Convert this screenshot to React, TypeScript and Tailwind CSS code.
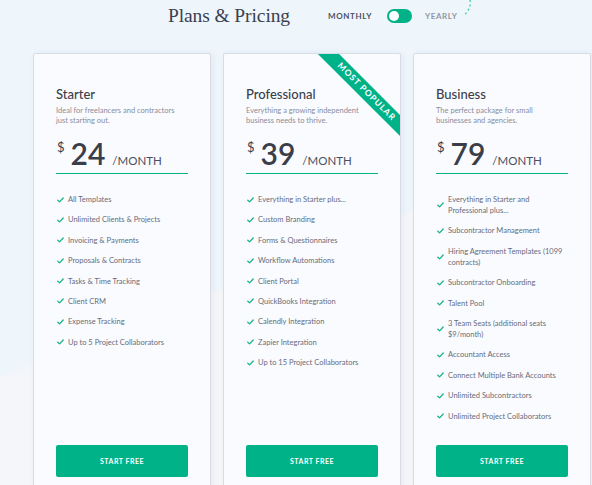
import type { ReactNode } from "react"

type Plan = {
     name: string
     desc: ReactNode
     price: string
     features: string[]
     popular?: boolean
}

const plans: Plan[] = [
     {
          name: "Starter",
          desc: (
               <>
                    Ideal for freelancers and contractors
                    <br />
                    just starting out.
               </>
          ),
          price: "24",
          features: [
               "All Templates",
               "Unlimited Clients & Projects",
               "Invoicing & Payments",
               "Proposals & Contracts",
               "Tasks & Time Tracking",
               "Client CRM",
               "Expense Tracking",
               "Up to 5 Project Collaborators",
          ],
     },
     {
          name: "Professional",
          desc: (
               <>
                    Everything a growing independent
                    <br />
                    business needs to thrive.
               </>
          ),
          price: "39",
          popular: true,
          features: [
               "Everything in Starter plus...",
               "Custom Branding",
               "Forms & Questionnaires",
               "Workflow Automations",
               "Client Portal",
               "QuickBooks Integration",
               "Calendly Integration",
               "Zapier Integration",
               "Up to 15 Project Collaborators",
          ],
     },
     {
          name: "Business",
          desc: (
               <>
                    The perfect package for small
                    <br />
                    businesses and agencies.
               </>
          ),
          price: "79",
          features: [
               "Everything in Starter and Professional plus...",
               "Subcontractor Management",
               "Hiring Agreement Templates (1099 contracts)",
               "Subcontractor Onboarding",
               "Talent Pool",
               "3 Team Seats (additional seats $9/month)",
               "Accountant Access",
               "Connect Multiple Bank Accounts",
               "Unlimited Subcontractors",
               "Unlimited Project Collaborators",
          ],
     },
]

const Check = () => (
     <svg width="7" height="6" viewBox="0 0 7 6" className="shrink-0">
          <polyline points="0.8,3.2 2.6,4.9 6.2,1" fill="none" stroke="#17b38c" strokeWidth="1.3" strokeLinecap="round" strokeLinejoin="round" />
     </svg>
)

const PlanCard = ({ plan }: { plan: Plan }) => (
     <div className="relative overflow-hidden box-border w-[178px] h-[452px] shrink-0 flex flex-col bg-[#fafbfe] border border-[#d9dce4] rounded-[2px] shadow-[2px_0_6px_rgba(150,160,180,0.12)] px-[22px] pt-[32px] pb-[27px]">
          {plan.popular && (
               <div className="absolute left-[76px] top-[29px] w-[130px] h-[15px] rotate-45 bg-[#00b288] flex items-center justify-center">
                    <span className="text-white text-[8.5px] font-bold tracking-[1px] leading-none pl-[4px] -mt-[1px]">MOST POPULAR</span>
               </div>
          )}

          <h2 className="text-[13px] leading-[16px] font-medium text-[#3b404b]">{plan.name}</h2>
          <p className="mt-[4px] text-[7.5px] leading-[10px] text-[#8a8c9c]">{plan.desc}</p>

          {/* price */}
          <div className="mt-[12px] flex items-baseline border-b-[1.5px] border-[#00b288] pb-[5px]">
               <span className="self-start text-[13px] leading-none text-[#3b404b] mt-[3px] ml-[1px]">$</span>
               <span className="ml-[6px] text-[30px] leading-none font-semibold text-[#3a3e48]">{plan.price}</span>
               <span className="ml-[7px] text-[11.5px] leading-none text-[#4b5060]">/MONTH</span>
          </div>

          <ul className="mt-[20px] flex flex-col gap-[9.4px]">
               {plan.features.map((f) => (
                    <li key={f} className="flex items-center gap-[4px] pl-[1px]">
                         <Check />
                         <span className="text-[7.5px] leading-[11px] text-[#676c7b]">{f}</span>
                    </li>
               ))}
          </ul>

          <button className="mt-auto h-[32px] w-full bg-[#00b288] rounded-[2px] text-white text-[7px] font-bold tracking-[0.5px]">
               START FREE
          </button>
     </div>
)

export default function App() {
     return (
          <div
               className="relative w-[592px] h-[485px] overflow-hidden bg-[linear-gradient(158deg,#eef5fb_52%,#f5f6f9_52.4%)]"
               style={{ fontFamily: "Lato, 'Open Sans', sans-serif" }}
          >
               {/* header */}
               <div className="flex items-center h-[31px] pl-[168px]">
                    <h1 className="text-[19.5px] leading-none text-[#3a4150] mt-[1px] tracking-[-0.1px]" style={{ fontFamily: "'Liberation Serif', serif" }}>
                         Plans &amp; Pricing
                    </h1>
                    <span className="ml-[38px] text-[8px] font-bold tracking-[0.6px] text-[#4a5262]">MONTHLY</span>
                    <div className="ml-[15px] w-[25px] h-[14px] rounded-full bg-[#00b288] flex items-center px-[2px]">
                         <div className="w-[10px] h-[10px] rounded-full bg-white" />
                    </div>
                    <span className="ml-[13px] text-[8px] font-bold tracking-[0.6px] text-[#9196a2]">YEARLY</span>
                    <svg width="12" height="18" viewBox="0 0 12 18" className="ml-[4px] -mt-[14px]">
                         <path d="M8 0 C 9 6, 7 11, 2 15" fill="none" stroke="#3cc6a2" strokeWidth="1.2" strokeDasharray="2 2.5" />
                    </svg>
               </div>

               {/* cards */}
               <div className="flex gap-[12px] pl-[33px] mt-[22px]">
                    {plans.map((p) => (
                         <PlanCard key={p.name} plan={p} />
                    ))}
               </div>
          </div>
     )
}
